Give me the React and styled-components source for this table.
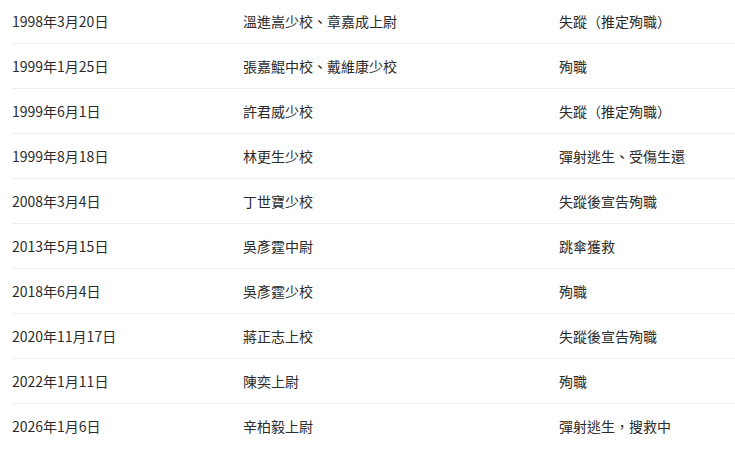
import React from "react";
import styled, { createGlobalStyle } from "styled-components";

const Global = createGlobalStyle`
  html, body { margin: 0; padding: 0; background: #ffffff; }
  body {
    font-family: "Noto Sans CJK TC", "Noto Sans", "Liberation Sans", sans-serif;
    color: #333333;
    overflow: hidden;
  }
`;

const Wrap = styled.div`
  box-sizing: border-box;
  width: 100%;
  padding-left: 12px;
  margin-top: -1px;
`;

const Table = styled.table`
  border-collapse: collapse;
  width: 100%;
  table-layout: fixed;
  font-size: 14px;
  line-height: 20px;
  text-spacing-trim: space-all;
`;

const Row = styled.tr`
  border-bottom: 1px solid #eeeeee;
  &:last-child { border-bottom: none; }
`;

const Cell = styled.td`
  width: ${(p) => p.$w || "auto"};
  height: 44px;
  padding: 0;
  vertical-align: middle;
  white-space: nowrap;
  color: #2b2b2b;
`;

const rows = [
  ["1998年3月20日", "溫進嵩少校、章嘉成上尉", "失蹤（推定殉職）"],
  ["1999年1月25日", "張嘉鯤中校、戴維康少校", "殉職"],
  ["1999年6月1日", "許君威少校", "失蹤（推定殉職）"],
  ["1999年8月18日", "林更生少校", "彈射逃生、受傷生還"],
  ["2008年3月4日", "丁世寶少校", "失蹤後宣告殉職"],
  ["2013年5月15日", "吳彥霆中尉", "跳傘獲救"],
  ["2018年6月4日", "吳彥霆少校", "殉職"],
  ["2020年11月17日", "蔣正志上校", "失蹤後宣告殉職"],
  ["2022年1月11日", "陳奕上尉", "殉職"],
  ["2026年1月6日", "辛柏毅上尉", "彈射逃生，搜救中"],
];

export default function App() {
  return (
    <>
      <Global />
      <Wrap>
        <Table>
          <tbody>
            {rows.map((r, i) => (
              <Row key={i}>
                <Cell $w="231px">{r[0]}</Cell>
                <Cell $w="316px">{r[1]}</Cell>
                <Cell>{r[2]}</Cell>
              </Row>
            ))}
          </tbody>
        </Table>
      </Wrap>
    </>
  );
}
